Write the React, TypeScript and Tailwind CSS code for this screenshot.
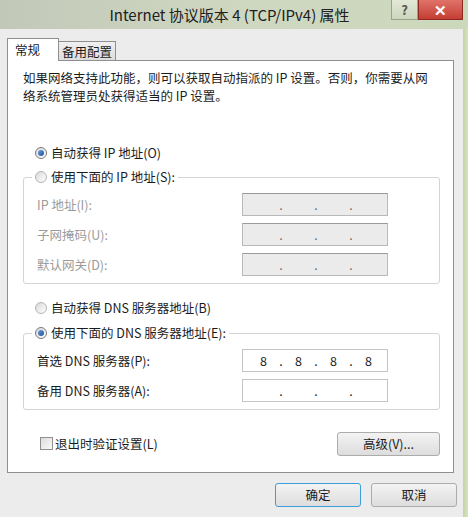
function Radio({ checked }: { checked?: boolean }) {
  return (
    <span
      className={`flex h-[12px] w-[12px] shrink-0 items-center justify-center rounded-full border bg-linear-to-br from-[#d9d9d9] to-[#ffffff] ${
        checked ? 'border-[#7a7a7a]' : 'border-[#b4b4b4]'
      }`}
    >
      {checked && <span className="h-[6px] w-[6px] rounded-full bg-linear-to-br from-[#6d9de0] to-[#1f4f9a]" />}
    </span>
  );
}

function IpField({ disabled, value }: { disabled?: boolean; value?: string[] }) {
  const parts = value ?? ['', '', '', ''];
  return (
    <div
      className={`flex h-[23px] w-[146px] items-center border pl-[10px] text-[12.5px] ${
        disabled ? 'border-[#b9b9b9] border-t-[#9a9a9a] bg-[#ebebeb] text-[#6d6d6d]' : 'border-[#c4c4c4] bg-white text-[#1b1b1b]'
      }`}
    >
      {parts.map((p, i) => (
        <div key={i} className="flex items-center">
          <span className="w-[21px] text-center">{p}</span>
          {i < 3 && <span className="w-[14px] text-center">.</span>}
        </div>
      ))}
    </div>
  );
}

function Button({ label, primary, w }: { label: string; primary?: boolean; w: string }) {
  return (
    <div
      className={`flex h-[24px] items-center justify-center rounded-[3px] border bg-linear-to-b from-[#f3f3f3] to-[#dddddd] text-[12.5px] text-[#1b1b1b] ${w} ${
        primary ? 'border-[#3c9fd9]' : 'border-[#acacac]'
      }`}
    >
      {label}
    </div>
  );
}

function Row({ label, children, muted }: { label: string; children: React.ReactNode; muted?: boolean }) {
  return (
    <div className="flex h-[23px] items-center">
      <span className={`w-[205px] ${muted ? 'text-[#9b9b9b]' : 'text-[#1b1b1b]'}`}>{label}</span>
      {children}
    </div>
  );
}

export default function App() {
  return (
    <div className="flex h-[517px] w-[468px] flex-col bg-[#ececec] font-['Noto_Sans_CJK_SC',sans-serif] text-[12.5px] leading-[18px] text-[#1b1b1b]">
      {/* title bar */}
      <div className="flex h-[29px] shrink-0 bg-linear-to-r from-[#c2c8b8] via-[#cfd7c1] to-[#ccd8bb]">
        <div className="flex flex-1 items-center justify-center pl-[68px] pt-[1px] text-[15px] text-[#202020]">
          Internet 协议版本 4 (TCP/IPv4) 属性
        </div>
        <div className="flex items-start pr-[5px]">
          <div className="flex h-[20px] w-[27px] items-center justify-center border border-t-0 border-[#9aa28c] bg-linear-to-b from-[#e2e8d6] to-[#cdd6bd] text-[13px] font-bold text-[#555]">
            ?
          </div>
          <div className="flex h-[20px] w-[45px] items-center justify-center border border-t-0 border-[#8e2a22] bg-linear-to-b from-[#e0726a] to-[#c43c32] text-[15px] font-bold text-white">
            ✕
          </div>
        </div>
      </div>

      <div className="flex flex-1">
        <div className="flex w-[463px] flex-col pt-[9px]">
          {/* tabs */}
          <div className="ml-[7px] flex h-[23px] items-end">
            <div className="relative z-10 flex h-[23px] w-[52px] items-center border border-b-0 border-[#8e8f8f] bg-white pl-[7px]">
              常规
            </div>
            <div className="-ml-px flex h-[20px] w-[58px] items-center border border-b-0 border-[#8e8f8f] bg-linear-to-b from-[#f0f0f0] to-[#dcdcdc] pl-[3px]">
              备用配置
            </div>
          </div>

          {/* panel */}
          <div className="-mt-px ml-[7px] flex w-[447px] flex-col border border-[#8e8f8f] bg-white pb-[17px] pt-[8px]">
            <p className="whitespace-nowrap pl-[15px]">
              如果网络支持此功能，则可以获取自动指派的 IP 设置。否则，你需要从网
              <br />
              络系统管理员处获得适当的 IP 设置。
            </p>

            <label className="ml-[27px] mt-[39px] flex h-[18px] items-center gap-[4px]">
              <Radio checked />
              自动获得 IP 地址(O)
            </label>

            <fieldset className="ml-[15px] mt-[6px] w-[417px] rounded-[3px] border border-[#d4d4d4]">
              <legend className="ml-[8px] px-[3px]">
                <span className="flex h-[18px] items-center gap-[4px]">
                  <Radio />
                  使用下面的 IP 地址(S):
                </span>
              </legend>
              <div className="flex flex-col gap-[7px] pb-[7px] pl-[13px] pt-[7px]">
                <Row label="IP 地址(I):" muted>
                  <IpField disabled />
                </Row>
                <Row label="子网掩码(U):" muted>
                  <IpField disabled />
                </Row>
                <Row label="默认网关(D):" muted>
                  <IpField disabled />
                </Row>
              </div>
            </fieldset>

            <label className="ml-[27px] mt-[15px] flex h-[18px] items-center gap-[4px]">
              <Radio />
              自动获得 DNS 服务器地址(B)
            </label>

            <fieldset className="ml-[15px] mt-[7px] w-[417px] rounded-[3px] border border-[#d4d4d4]">
              <legend className="ml-[8px] px-[3px]">
                <span className="flex h-[18px] items-center gap-[4px]">
                  <Radio checked />
                  使用下面的 DNS 服务器地址(E):
                </span>
              </legend>
              <div className="flex flex-col gap-[7px] pb-[7px] pl-[13px] pt-[7px]">
                <Row label="首选 DNS 服务器(P):">
                  <IpField value={['8', '8', '8', '8']} />
                </Row>
                <Row label="备用 DNS 服务器(A):">
                  <IpField />
                </Row>
              </div>
            </fieldset>

            <div className="ml-[32px] mr-[13px] mt-[22px] flex h-[23px] items-center justify-between">
              <label className="flex items-center gap-[2px]">
                <span className="h-[13px] w-[13px] border border-[#8f8f8f] bg-linear-to-br from-[#dcdcdc] to-[#fafafa]" />
                退出时验证设置(L)
              </label>
              <Button label="高级(V)..." w="w-[103px] h-[23px]" />
            </div>
          </div>

          {/* dialog buttons */}
          <div className="mt-[10px] flex justify-end gap-[10px] pr-[6px]">
            <Button label="确定" primary w="w-[86px]" />
            <Button label="取消" w="w-[86px]" />
          </div>
        </div>
        <div className="w-[5px] bg-linear-to-r from-[#c2d4a6] to-[#d6e4bc]" />
      </div>
    </div>
  );
}
